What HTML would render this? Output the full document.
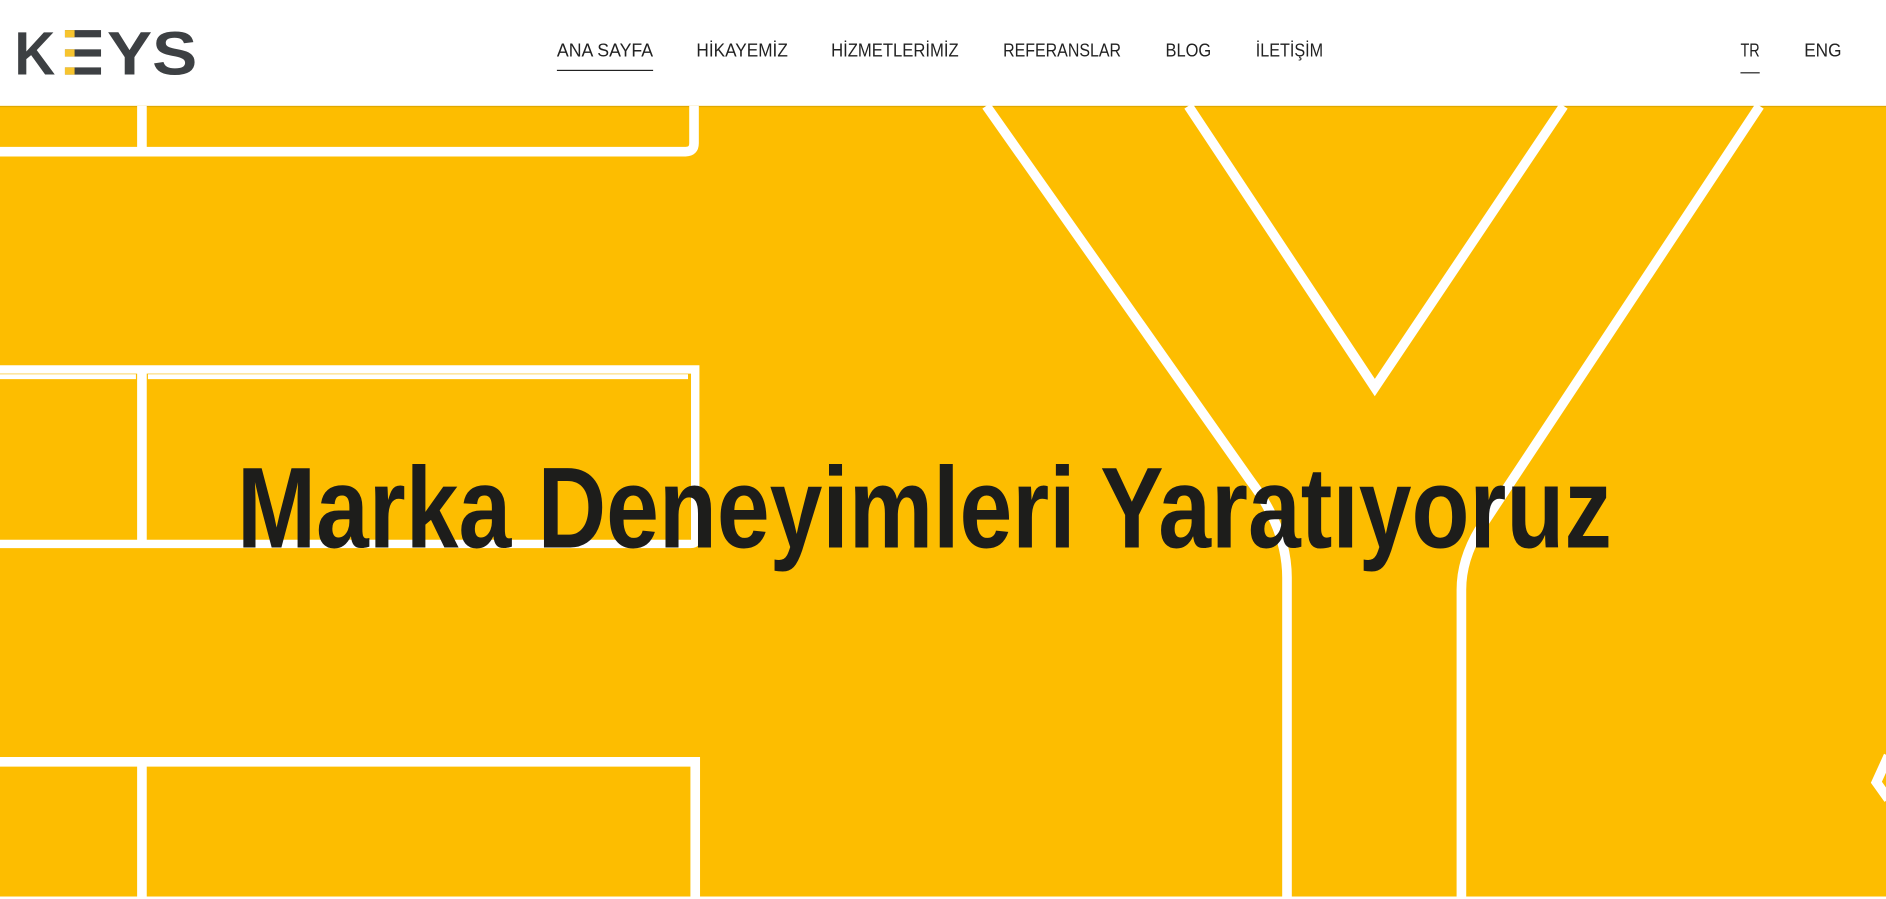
<!DOCTYPE html>
<html><head><meta charset="utf-8"><style>
html,body{margin:0;padding:0;width:1886px;height:899px;overflow:hidden;background:#fff}
svg{display:block}
</style></head><body>
<svg width="1886" height="899" viewBox="0 0 1568 747" preserveAspectRatio="none" xmlns="http://www.w3.org/2000/svg">
<rect x="0" y="0" width="1568" height="747" fill="#fff"/>
<rect x="0" y="88" width="1568" height="657" fill="#FDBD00"/>
<rect x="0" y="88" width="1568" height="1" fill="#e0a800"/>
<g stroke="#fff" stroke-width="8" fill="none">
<path d="M0,126 H570 Q577,126 577,119 V88"/>
<path d="M118,88 V130"/>
<path d="M0,307 H578 V450 Q578,452 574,452 H0" stroke-width="7"/>
<path d="M0,313 H113 M123,313 H572" stroke-width="4"/>
<path d="M118,307 V455"/>
<path d="M0,633 H578 V747"/>
<path d="M118,633 V747"/>
<path d="M820,88 L1040,400 Q1070,440 1070,480 V747"/>
<path d="M988,88 L1143,322 L1300,88"/>
<path d="M1463,88 L1230,440 Q1215,465 1215,490 V747"/>
<path d="M1570,628 L1560,650 L1570,664"/>
</g>
<rect x="0" y="745" width="1568" height="2" fill="#fff"/>
<g fill="#3d4043" font-family="Liberation Sans, sans-serif" font-weight="bold">
<text x="12" y="62" font-size="51" textLength="34" lengthAdjust="spacingAndGlyphs">K</text>
<rect x="54" y="25" width="30" height="6"/>
<rect x="54" y="41" width="30" height="6"/>
<rect x="54" y="56" width="30" height="6"/>
<rect x="54" y="25" width="8" height="6" fill="#F7C42E"/>
<rect x="54" y="41" width="8" height="6" fill="#F7C42E"/>
<rect x="54" y="56" width="8" height="6" fill="#F7C42E"/>
<text x="89" y="62" font-size="51" textLength="75" lengthAdjust="spacingAndGlyphs">YS</text>
</g>
<g fill="#222" font-family="Liberation Sans, sans-serif" font-size="15">
<text x="463" y="47" textLength="80" lengthAdjust="spacingAndGlyphs">ANA SAYFA</text>
<text x="579" y="47" textLength="76" lengthAdjust="spacingAndGlyphs">HİKAYEMİZ</text>
<text x="691" y="47" textLength="106" lengthAdjust="spacingAndGlyphs">HİZMETLERİMİZ</text>
<text x="834" y="47" textLength="98" lengthAdjust="spacingAndGlyphs">REFERANSLAR</text>
<text x="969" y="47" textLength="38" lengthAdjust="spacingAndGlyphs">BLOG</text>
<text x="1044" y="47" textLength="56" lengthAdjust="spacingAndGlyphs">İLETİŞİM</text>
<text x="1447" y="47" textLength="16" lengthAdjust="spacingAndGlyphs">TR</text>
<text x="1500" y="47" textLength="31" lengthAdjust="spacingAndGlyphs">ENG</text>
</g>
<rect x="463" y="58" width="80" height="1" fill="#222"/>
<rect x="1447" y="60" width="16" height="1" fill="#222"/>
<text x="197" y="455" font-family="Liberation Sans, sans-serif" font-weight="bold" font-size="96" fill="#1d1d1b" textLength="1143" lengthAdjust="spacingAndGlyphs">Marka Deneyimleri Yaratıyoruz</text>
</svg>
</body></html>
